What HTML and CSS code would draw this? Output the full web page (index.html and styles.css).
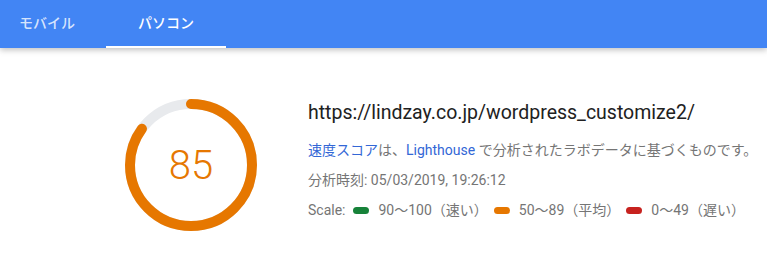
FILE: index.html
```html
<!DOCTYPE html>
<html lang="ja">
<head>
    <meta charset="UTF-8">
    <meta name="viewport" content="width=device-width, initial-scale=1.0">
    <title>PageSpeed Insights</title>
    <link rel="stylesheet" href="styles.css">
</head>
<body>

    <!-- タブ -->
    <div class="tabs">
        <div class="tab">モバイル</div>
        <div class="tab active">パソコン</div>
    </div>

    <!-- 結果 -->
    <div class="result">
        <div class="gauge">
            <svg width="134" height="134" viewBox="0 0 134 134">
                <circle cx="67" cy="67" r="61" fill="none" stroke="#e8eaed" stroke-width="10"/>
                <circle cx="67" cy="67" r="61" fill="none" stroke="#e67700" stroke-width="10"
                    stroke-linecap="round" stroke-dasharray="325.8 383.3"
                    transform="rotate(-90 67 67)"/>
            </svg>
            <div class="score">85</div>
        </div>

        <div class="summary">
            <div class="url">https://lindzay.co.jp/wordpress_customize2/</div>
            <div class="desc"><a href="#">速度スコア</a>は、<a href="#">Lighthouse</a> で分析されたラボデータに基づくものです。</div>
            <div class="time">分析時刻: 05/03/2019, 19:26:12</div>
            <div class="scale">
                <span>Scale:</span>
                <span class="item"><i class="pill fast"></i>90～100（速い）</span>
                <span class="item"><i class="pill average"></i>50～89（平均）</span>
                <span class="item"><i class="pill slow"></i>0～49（遅い）</span>
            </div>
        </div>
    </div>

</body>
</html>
```

FILE: styles.css
```css
body {
    font-family: Roboto, "Noto Sans CJK JP", sans-serif;
    background-color: #fff;
    margin: 0;
    padding: 0;
    color: #757575;
}
.tabs {
    display: flex;
    height: 48px;
    background-color: #4285f4;
    box-shadow: 0 2px 6px rgba(0, 0, 0, 0.25);
}
.tab {
    width: 94px;
    text-align: center;
    color: rgba(255, 255, 255, 0.8);
    font-size: 14px;
    font-weight: 500;
    line-height: 46px;
    border-bottom: 2px solid transparent;
    box-sizing: border-box;
}
.tab.active {
    width: 120px;
    margin-left: 12px;
    color: #fff;
    border-bottom-color: #fff;
}
.result {
    display: flex;
    padding: 50px 0 0 124px;
}
.gauge {
    position: relative;
    width: 134px;
    height: 134px;
}
.gauge svg {
    display: block;
}
.score {
    position: absolute;
    top: 0;
    left: 0;
    right: 0;
    bottom: 0;
    display: flex;
    align-items: center;
    justify-content: center;
    color: #e67700;
    font-size: 40px;
    font-weight: 300;
}
.summary {
    margin-left: 50px;
    padding-top: 3px;
}
.url {
    font-size: 19.5px;
    color: #212121;
    line-height: 24px;
    margin-bottom: 15px;
}
.desc, .time, .scale {
    font-size: 14px;
    line-height: 20px;
    margin-bottom: 10px;
}
.desc a {
    color: #3367d6;
    text-decoration: none;
}
.scale {
    display: flex;
    align-items: center;
}
.item {
    display: flex;
    align-items: center;
    margin-left: 8px;
}
.item + .item {
    margin-left: 6px;
}
.pill {
    display: inline-block;
    width: 16px;
    height: 7px;
    border-radius: 4px;
    margin-right: 9px;
}
.fast { background-color: #178239; }
.average { background-color: #e67700; }
.slow { background-color: #c7221f; }
```
